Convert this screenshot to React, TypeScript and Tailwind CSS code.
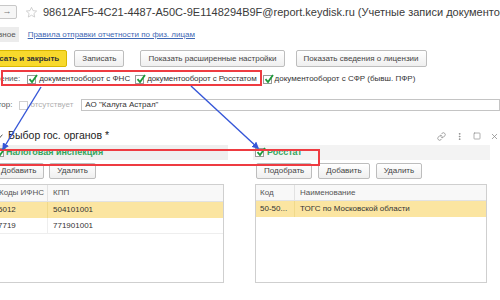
import React from "react";
import { Link, EllipsisVertical, Square, X } from "lucide-react";

const Check: React.FC<{ on?: boolean; disabled?: boolean }> = ({ on = true, disabled = false }) => (
  <span
    className={`relative inline-flex h-[9px] w-[9px] shrink-0 items-center justify-center border bg-white ${
      disabled ? "border-[#d0d0d0]" : "border-[#9a9a9a]"
    }`}
  >
    {on && (
      <svg viewBox="0 0 10 10" className="absolute -top-[2px] left-[0px] h-[10px] w-[10px]">
        <path d="M1.5 5.2 L4 8 L9 1" fill="none" stroke="#1f9a3c" strokeWidth="1.8" />
      </svg>
    )}
  </span>
);

const Btn: React.FC<{ children: React.ReactNode; className?: string }> = ({ children, className = "" }) => (
  <div
    className={`flex h-[16px] shrink-0 items-center whitespace-nowrap rounded-[2px] border border-[#bdbdbd] bg-gradient-to-b from-white to-[#efefef] px-[7px] text-[8px] text-[#444] ${className}`}
  >
    {children}
  </div>
);

export default function App() {
  return (
    <div className="relative h-[300px] w-[500px] overflow-hidden bg-white font-['Liberation_Sans',Arial,sans-serif] text-[8px] text-[#333]">
      {/* Title row */}
      <div className="flex h-[24px] items-center">
        <div className="-ml-[3px] flex h-[14px] w-[20px] shrink-0 items-center justify-center rounded-[2px] border border-[#c8c8c8] bg-[#f6f6f6] text-[9px] text-[#777]">
          →
        </div>
        <svg viewBox="0 0 24 24" className="ml-[8px] h-[13px] w-[13px] shrink-0">
          <path
            d="M12 2.5 L14.9 8.6 L21.5 9.3 L16.5 13.8 L17.9 20.4 L12 17 L6.1 20.4 L7.5 13.8 L2.5 9.3 L9.1 8.6 Z"
            fill="none"
            stroke="#c4c4c4"
            strokeWidth="1.4"
            strokeLinejoin="round"
          />
        </svg>
        <div className="ml-[5px] shrink-0 whitespace-nowrap text-[11px] text-[#3a3a3a]">
          98612AF5-4C21-4487-A50C-9E1148294B9F@report.keydisk.ru (Учетные записи документооборота)
        </div>
      </div>

      {/* Tabs / link row */}
      <div className="mt-[3px] flex h-[15px] items-center">
        <div className="-ml-[24px] flex h-full shrink-0 items-center bg-[#ececec] px-[3px] text-[#555]">Основное</div>
        <a className="ml-[9px] shrink-0 whitespace-nowrap text-[#3f68b4] underline">Правила отправки отчетности по физ. лицам</a>
      </div>

      {/* Command bar */}
      <div className="mt-[8px] flex h-[17px] items-center">
        <div className="-ml-[28px] flex h-full shrink-0 items-center whitespace-nowrap rounded-[2px] border border-[#d9b800] bg-[#f8d92c] px-[7px] font-bold text-[#333]">
          Записать и закрыть
        </div>
        <Btn className="ml-[7px] h-[17px]">Записать</Btn>
        <Btn className="ml-[16px] h-[17px]">Показать расширенные настройки</Btn>
        <Btn className="ml-[11px] h-[17px]">Показать сведения о лицензии</Btn>
      </div>

      {/* Direction checkboxes */}
      <div className="mt-[4px] flex h-[16px] items-center whitespace-nowrap">
        <span className="-ml-[32px] shrink-0 text-[#555]">Направление:</span>
        <span className="ml-[7px] flex shrink-0"><Check /></span>
        <span className="ml-[3px] shrink-0">документооборот с ФНС</span>
        <span className="ml-[5px] flex shrink-0"><Check /></span>
        <span className="ml-[3px] shrink-0 tracking-[-0.1px]">документооборот с Росстатом</span>
        <span className="ml-[6px] flex shrink-0"><Check /></span>
        <span className="ml-[3px] shrink-0">документооборот с СФР (бывш. ПФР)</span>
      </div>

      {/* Operator */}
      <div className="mt-[12px] flex h-[12px] items-center whitespace-nowrap">
        <span className="-ml-[26px] shrink-0 text-[#555]">Оператор:</span>
        <span className="ml-[7px] flex shrink-0"><Check on={false} disabled /></span>
        <span className="ml-[2px] shrink-0 text-[#b0b0b0]">отсутствует</span>
        <div className="ml-[8px] flex h-[12px] flex-1 items-center border border-[#c4c4c4] pl-[3px] text-[#333]">
          АО "Калуга Астрал"
        </div>
      </div>

      {/* Group header */}
      <div className="mt-[19px] flex h-[12px] items-center">
        <svg viewBox="0 0 8 6" className="-ml-[4px] h-[5px] w-[7px] shrink-0">
          <path d="M0.5 0.8 L4 4.8 L7.5 0.8" fill="none" stroke="#555" strokeWidth="1.2" />
        </svg>
        <span className="ml-[5px] shrink-0 text-[10.5px] text-[#222]">Выбор гос. органов *</span>
        <div className="ml-auto mr-[1px] flex items-center gap-[9px] text-[#888]">
          <Link size={9} strokeWidth={2} />
          <EllipsisVertical size={9} strokeWidth={2.4} />
          <Square size={8} strokeWidth={2} />
          <X size={9} strokeWidth={2} />
        </div>
      </div>

      {/* Two panels */}
      <div className="mt-[3px] flex">
        {/* Left: tax */}
        <div className="-ml-[8px] flex w-[236px] shrink-0 flex-col">
          <div className="flex h-[15px] items-center bg-[#efefef] pl-[3px]">
            <Check />
            <span className="ml-[2px] whitespace-nowrap text-[9px] font-bold text-[#33a55b]">Налоговая инспекция</span>
          </div>
          <div className="mt-[3px] flex h-[16px] gap-[5px] pl-[1px]">
            <Btn>Добавить</Btn>
            <Btn>Удалить</Btn>
          </div>
          <div className="ml-[2px] mt-[5px] h-[99px] w-[230px] whitespace-nowrap border border-[#cfcfcf] bg-white">
            <div className="flex h-[17px] border-b border-[#e2e2e2] bg-[#f8f8f8] text-[#555]">
              <div className="flex w-[53px] shrink-0 items-center overflow-hidden border-r border-[#e2e2e2] pl-[4px]">Коды ИФНС</div>
              <div className="flex items-center pl-[5px]">КПП</div>
            </div>
            <div className="flex h-[16px] bg-[#fbe5a1]">
              <div className="flex w-[53px] shrink-0 items-center border-r border-[#f0d98a] pl-[3px]">5012</div>
              <div className="flex items-center pl-[5px]">504101001</div>
            </div>
            <div className="flex h-[16px] border-b border-[#eeeeee]">
              <div className="flex w-[53px] shrink-0 items-center border-r border-[#eeeeee] pl-[3px]">7719</div>
              <div className="flex items-center pl-[5px]">771901001</div>
            </div>
          </div>
        </div>

        {/* Right: Rosstat */}
        <div className="ml-[25px] flex w-[237px] shrink-0 flex-col">
          <div className="flex h-[15px] items-center bg-[#f3f3f3] pl-[2px]">
            <Check />
            <span className="ml-[3px] text-[9px] font-bold text-[#33a55b]">Росстат</span>
          </div>
          <div className="mt-[3px] flex h-[16px] gap-[6px] pl-[3px]">
            <Btn>Подобрать</Btn>
            <Btn>Добавить</Btn>
            <Btn>Удалить</Btn>
          </div>
          <div className="ml-[2px] mt-[5px] h-[99px] w-[232px] whitespace-nowrap border border-[#cfcfcf] bg-white">
            <div className="flex h-[16px] border-b border-[#e2e2e2] bg-[#f8f8f8] text-[#555]">
              <div className="flex w-[39px] shrink-0 items-center border-r border-[#e2e2e2] pl-[4px]">Код</div>
              <div className="flex items-center pl-[5px]">Наименование</div>
            </div>
            <div className="flex h-[16px] bg-[#fbe5a1]">
              <div className="flex w-[39px] shrink-0 items-center border-r border-[#f0d98a] pl-[4px]">50-50...</div>
              <div className="flex items-center pl-[5px]">ТОГС по Московской области</div>
            </div>
          </div>
        </div>
      </div>

      {/* Annotations */}
      <div className="pointer-events-none absolute left-[1px] top-[70px] h-[16px] w-[261px] border-2 border-solid border-[color:#ee3b41]" />
      <div className="pointer-events-none absolute -left-[2px] top-[149px] h-[17px] w-[322px] border-2 border-solid border-[color:#ee3b41]" />
      <svg className="pointer-events-none absolute left-0 top-0" width="500" height="300">
        <defs>
          <marker id="ah" viewBox="0 0 10 10" refX="8" refY="5" markerWidth="5" markerHeight="5" orient="auto">
            <path d="M0 0 L10 5 L0 10 Z" fill="#3556d8" />
          </marker>
        </defs>
        <line x1="41" y1="87" x2="3" y2="149" stroke="#3556d8" strokeWidth="1.4" markerEnd="url(#ah)" />
        <line x1="191" y1="86" x2="258" y2="148" stroke="#3556d8" strokeWidth="1.4" markerEnd="url(#ah)" />
      </svg>
    </div>
  );
}
